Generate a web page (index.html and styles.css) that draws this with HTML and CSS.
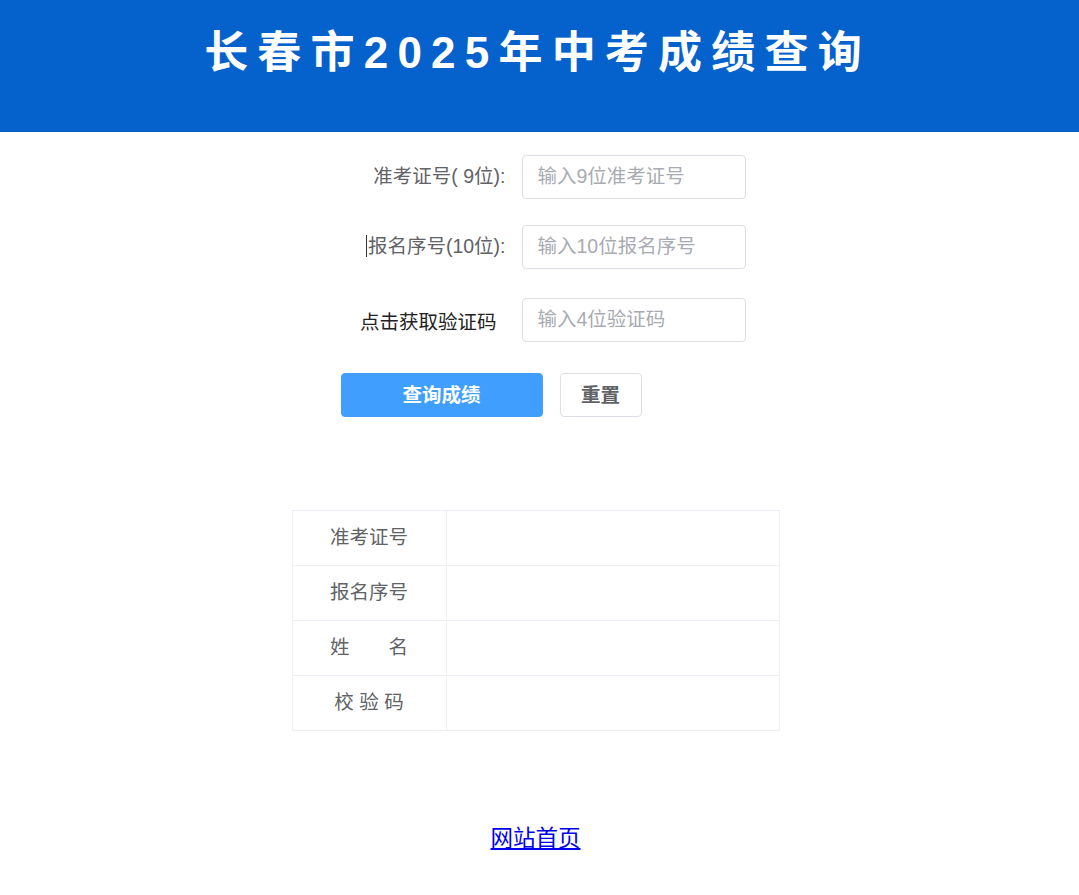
FILE: index.html
```html
<!DOCTYPE html>
<html lang="zh-CN">
<head>
<meta charset="utf-8">
<title>长春市2025年中考成绩查询</title>
<link rel="stylesheet" href="styles.css">
</head>
<body>
<header class="banner">
  <h1 class="title">长春市2025年中考成绩查询</h1>
</header>
<main class="main">
  <form class="form">
    <div class="row">
      <label class="label">准考证号( 9位):</label>
      <input class="input" type="text" placeholder="输入9位准考证号">
    </div>
    <div class="row row2">
      <label class="label"><span class="caret"></span>报名序号(10位):</label>
      <input class="input" type="text" placeholder="输入10位报名序号">
    </div>
    <div class="row row3">
      <label class="label label-code">点击获取验证码</label>
      <input class="input" type="text" placeholder="输入4位验证码">
    </div>
    <div class="actions">
      <button type="button" class="btn btn-primary">查询成绩</button>
      <button type="button" class="btn btn-default">重置</button>
    </div>
  </form>
  <table class="result">
    <tr><td class="key">准考证号</td><td class="val"></td></tr>
    <tr><td class="key">报名序号</td><td class="val"></td></tr>
    <tr><td class="key">姓&emsp;&emsp;名</td><td class="val"></td></tr>
    <tr><td class="key">校 验 码</td><td class="val"></td></tr>
  </table>
  <div class="footer"><a href="#" class="home">网站首页</a></div>
</main>
</body>
</html>
```
FILE: styles.css
```css
html, body {
  margin: 0;
  padding: 0;
  background: #fff;
}
body {
  font-family: "Liberation Sans", "Noto Sans CJK SC", sans-serif;
  color: #606266;
}
.banner {
  height: 132px;
  background: #0561cc;
  box-sizing: border-box;
  padding-top: 23px;
}
.title {
  margin: 0;
  text-align: center;
  color: #fff;
  font-family: "Liberation Sans", "Noto Sans CJK SC", sans-serif;
  font-weight: bold;
  font-size: 44px;
  line-height: 60px;
  letter-spacing: 9.2px;
  padding-right: 4px;
}
.main {
  width: 488px;
  margin-left: calc(50% - 248px);
}
.form {
  padding-top: 23px;
}
.row {
  display: flex;
  align-items: center;
  gap: 16px;
}
.row2 { margin-top: 26px; }
.row3 { margin-top: 29px; }
.label {
  width: 214px;
  text-align: right;
  font-size: 19.5px;
  line-height: 24px;
  color: #606266;
  box-sizing: border-box;
  padding-bottom: 2px;
}
.caret {
  display: inline-block;
  width: 1px;
  height: 22px;
  background: #333;
  vertical-align: -4px;
  margin-right: 1px;
}
.label-code {
  color: #222;
  padding-right: 9px;
  padding-top: 3px;
  padding-bottom: 0;
}
.input {
  width: 224px;
  height: 44px;
  box-sizing: border-box;
  border: 1px solid #dcdfe6;
  border-radius: 4px;
  padding: 0 15px 2px;
  font-size: 19.5px;
  font-family: "Liberation Sans", "Noto Sans CJK SC", sans-serif;
  color: #606266;
  outline: none;
}
.input::placeholder {
  color: #a8abb2;
}
.actions {
  display: flex;
  gap: 17px;
  margin-top: 31px;
  padding-left: 49px;
}
.btn {
  height: 44px;
  border-radius: 4px;
  font-size: 19.5px;
  font-weight: bold;
  font-family: "Liberation Sans", "Noto Sans CJK SC", sans-serif;
  cursor: pointer;
  padding: 0 0 3px;
}
.btn-primary {
  width: 202px;
  background: #409eff;
  border: 1px solid #409eff;
  color: #fff;
}
.btn-default {
  width: 82px;
  background: #fff;
  border: 1px solid #dcdfe6;
  color: #606266;
}
.result {
  width: 488px;
  margin-top: 93px;
  border-collapse: collapse;
  border: 1px solid #ebeef5;
}
.result td {
  height: 55px;
  border: 1px solid #ebeef5;
  box-sizing: border-box;
  padding: 0 0 5px;
}
.result .key {
  width: 154px;
  text-align: center;
  font-size: 19.5px;
  color: #606266;
}
.footer {
  margin-top: 89px;
  text-align: center;
}
.home {
  font-family: "Noto Sans CJK SC", sans-serif;
  font-size: 22.5px;
  color: #0000ee;
}
```
